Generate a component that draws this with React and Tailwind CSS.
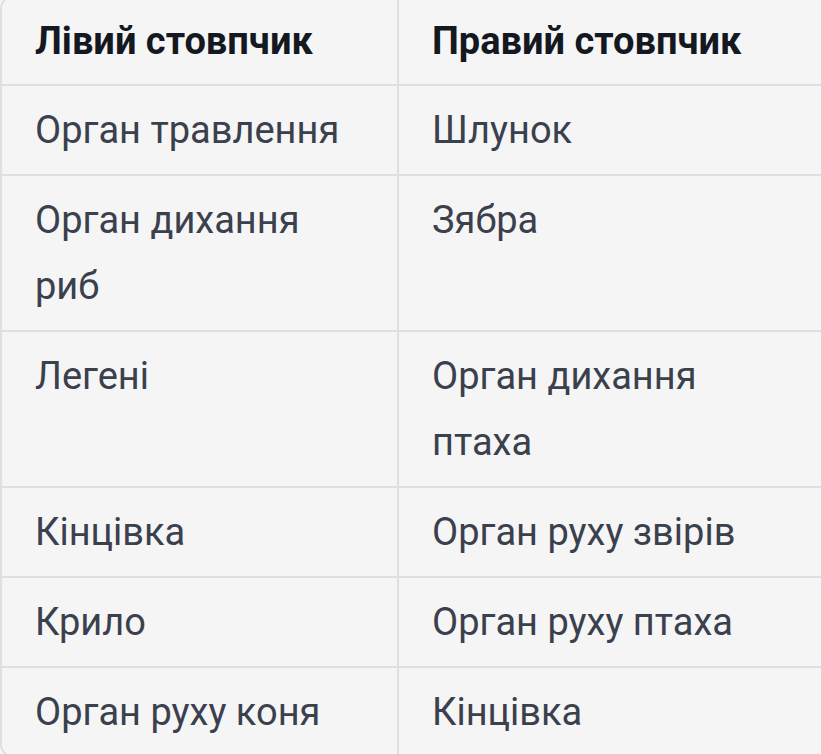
export default function App() {
  const rows = [
    [["Орган травлення"], ["Шлунок"]],
    [["Орган дихання", "риб"], ["Зябра"]],
    [["Легені"], ["Орган дихання", "птаха"]],
    [["Кінцівка"], ["Орган руху звірів"]],
    [["Крило"], ["Орган руху птаха"]],
    [["Орган руху коня"], ["Кінцівка"]],
  ];
  return (
    <div className="w-[821px] h-[754px] overflow-hidden bg-[#f5f5f6]" style={{ fontFamily: "Roboto, 'Noto Sans', sans-serif" }}>
      <div className="w-[840px] -mt-[5px] border-2 border-[#dedee3] rounded-[14px] bg-[#f5f5f6]">
        <div className="grid grid-cols-[397px_1fr] border-b-2 border-[#dedee3]">
          <div className="h-[87px] flex items-center pl-[33px] text-[38px] font-bold text-[#141821] border-r-2 border-[#dedee3] pt-[1px]">Лівий стовпчик</div>
          <div className="h-[87px] flex items-center pl-[33px] text-[38px] font-bold text-[#141821] pt-[1px]">Правий стовпчик</div>
        </div>
        {rows.map((r, i) => (
          <div key={i} className={"grid grid-cols-[397px_1fr] " + (i < rows.length - 1 ? "border-b-2 border-[#dedee3]" : "")}>
            <div className="py-[11px] pl-[33px] text-[38px] leading-[66px] text-[#3a404c] border-r-2 border-[#dedee3]">
              {r[0].map((t, j) => <div key={j}>{t}</div>)}
            </div>
            <div className="py-[11px] pl-[33px] text-[38px] leading-[66px] text-[#3a404c]">
              {r[1].map((t, j) => <div key={j}>{t}</div>)}
            </div>
          </div>
        ))}
      </div>
    </div>
  );
}
